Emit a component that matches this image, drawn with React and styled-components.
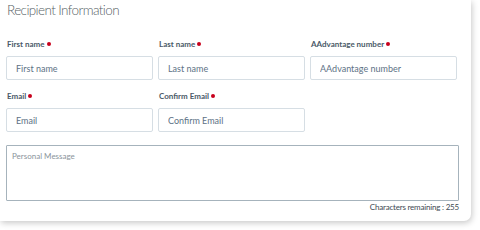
import React from "react";
import styled, { createGlobalStyle } from "styled-components";

const GlobalStyle = createGlobalStyle`
  html, body {
    margin: 0;
    padding: 0;
    background: #ffffff;
  }
  body {
    font-family: Lato, "Open Sans", sans-serif;
  }
`;

const fields = [
  { label: "First name", placeholder: "First name" },
  { label: "Last name", placeholder: "Last name" },
  { label: "AAdvantage number", placeholder: "AAdvantage number" },
  { label: "Email", placeholder: "Email" },
  { label: "Confirm Email", placeholder: "Confirm Email" },
];

export default function App() {
  return (
    <Page>
      <GlobalStyle />
      <Card>
        <Title>Recipient Information</Title>
        <FieldGrid>
          {fields.map((f) => (
            <Field key={f.label}>
              <Label>
                {f.label}
                <Required />
              </Label>
              <Input placeholder={f.placeholder} />
            </Field>
          ))}
        </FieldGrid>
        <Message placeholder="Personal Message" />
        <Counter>Characters remaining : 255</Counter>
      </Card>
    </Page>
  );
}

const Page = styled.div`
  width: 480px;
  height: 230px;
  padding: 0 9px 9px 0;
  box-sizing: border-box;
`;

const Card = styled.div`
  width: 471px;
  height: 221px;
  box-sizing: border-box;
  background: #fff;
  border-bottom-right-radius: 7px;
  box-shadow: 1px 2px 6px rgba(0, 0, 0, 0.22);
  padding: 1px 12px 0 6px;
  display: flex;
  flex-direction: column;
`;

const Title = styled.h2`
  font-family: Lato, sans-serif;
  font-weight: 300;
  font-size: 13.5px;
  letter-spacing: -0.6px;
  color: #585f66;
  margin: 0 0 0 1px;
  line-height: 18px;
`;

const FieldGrid = styled.div`
  display: grid;
  grid-template-columns: repeat(3, 147px);
  column-gap: 5px;
  row-gap: 11px;
  margin-top: 20px;
`;

const Field = styled.div`
  display: flex;
  flex-direction: column;
`;

const Label = styled.label`
  font-family: Lato, sans-serif;
  font-weight: 700;
  font-size: 8px;
  color: #4a5a68;
  line-height: 10px;
  padding-left: 1px;
  margin-bottom: 7px;
  display: flex;
  align-items: center;
`;

const Required = styled.span`
  width: 4px;
  height: 4px;
  border-radius: 50%;
  background: #c8001c;
  margin-left: 2px;
`;

const Input = styled.input`
  height: 24px;
  box-sizing: border-box;
  border: 1px solid #d6dee4;
  border-radius: 2px;
  padding: 0 9px;
  font-family: Lato, sans-serif;
  font-size: 9px;
  outline: none;
  &::placeholder {
    color: #5d7285;
  }
`;

const Message = styled.textarea`
  margin-top: 13px;
  width: 453px;
  height: 56px;
  box-sizing: border-box;
  border: 1px solid #a6b3bc;
  border-radius: 1px;
  padding: 5px 5px;
  resize: none;
  font-family: Lato, sans-serif;
  font-size: 8px;
  outline: none;
  &::placeholder {
    color: #8a949b;
  }
`;

const Counter = styled.div`
  width: 453px;
  text-align: right;
  font-family: Lato, sans-serif;
  font-size: 8px;
  letter-spacing: -0.2px;
  color: #3e4a53;
  margin-top: 1px;
`;
